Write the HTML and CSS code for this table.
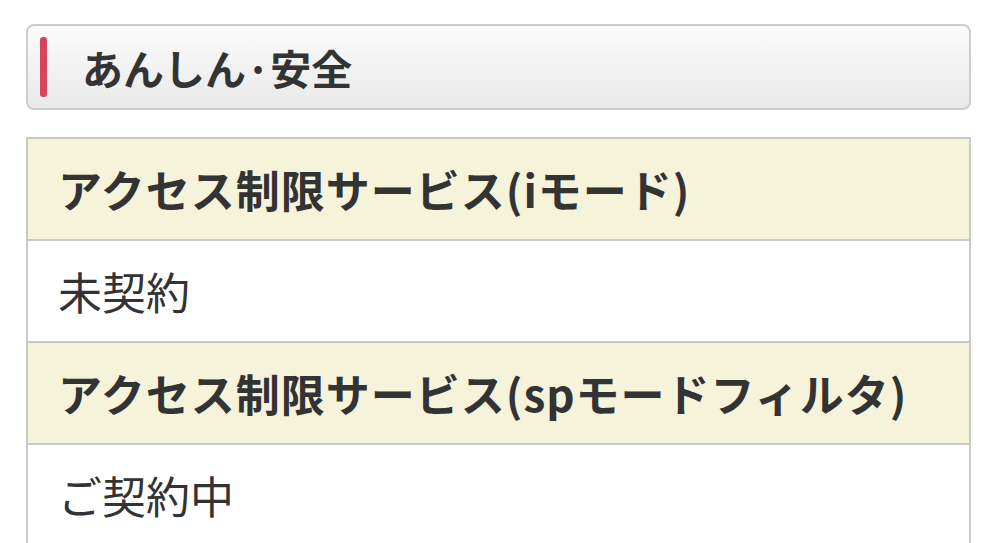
FILE: index.html
```html
<!DOCTYPE html>
<html lang="ja">
<head>
<meta charset="utf-8">
<link rel="stylesheet" href="styles.css">
</head>
<body>
<div class="page">
  <div class="section-head">
    <span class="mark"></span>
    <h2 class="section-title">あんしん·安全</h2>
  </div>
  <div class="info-table">
    <div class="row row-label">アクセス制限サービス(iモード)</div>
    <div class="row row-value">未契約</div>
    <div class="row row-label">アクセス制限サービス(spモードフィルタ)</div>
    <div class="row row-value">ご契約中</div>
  </div>
</div>
</body>
</html>
```
FILE: styles.css
```css
html, body {
  margin: 0;
  padding: 0;
  background: #ffffff;
}
body {
  font-family: "Noto Sans CJK JP", "Noto Sans", sans-serif;
  color: #333333;
  overflow: hidden;
}
.page {
  padding: 24px 28px 0 26px;
}
.section-head {
  display: flex;
  align-items: center;
  height: 82px;
  border: 2px solid #cdcdcd;
  border-radius: 8px;
  background: linear-gradient(#fbfbfb, #e9e9e9);
  padding-left: 12px;
}
.mark {
  width: 7px;
  height: 60px;
  border-radius: 3px;
  background: #d8445a;
  flex: none;
}
.section-title {
  margin: 0 0 0 35px;
  font-size: 41px;
  font-weight: 700;
  line-height: 1;
  color: #333333;
}
.info-table {
  margin-top: 27px;
  border: 2px solid #c9c9c9;
  border-bottom: none;
}
.row {
  height: 100px;
  display: flex;
  align-items: center;
  padding-left: 30px;
  font-size: 44px;
  line-height: 1;
  border-bottom: 2px solid #c9c9c9;
  white-space: nowrap;
}
.row-label {
  background: #f5f3da;
  font-weight: 700;
  letter-spacing: 1px;
}
.row-value {
  background: #ffffff;
  font-weight: 400;
}
```
